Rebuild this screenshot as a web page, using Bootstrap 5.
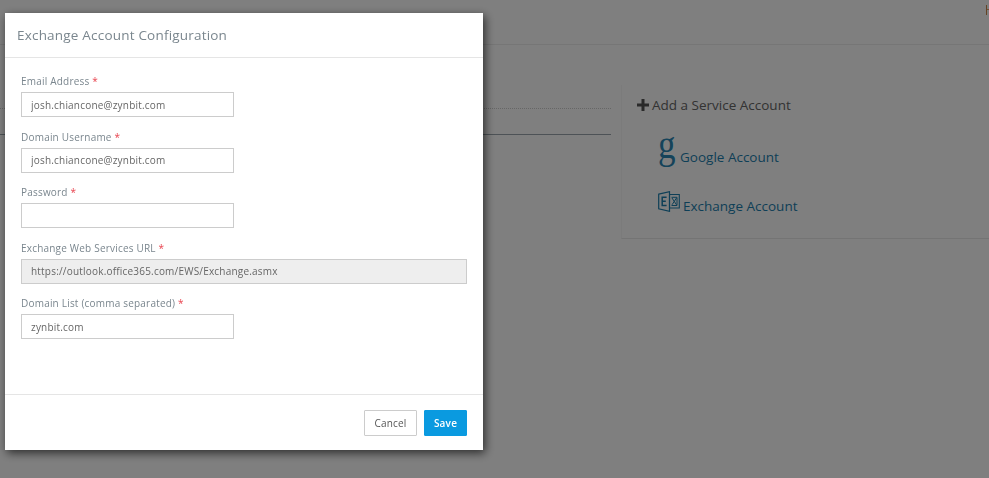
<!DOCTYPE html>
<html lang="en">
<head>
<meta charset="utf-8">
<title>Exchange Account Configuration</title>
<link href="https://cdn.jsdelivr.net/npm/bootstrap@5.3.0/dist/css/bootstrap.min.css" rel="stylesheet">
<style>
html,body{height:478px;overflow:hidden}
body{font-family:"Open Sans",sans-serif;background:#fff;color:#333}
.pg-top{height:45px;border-bottom:1px solid #ececec;display:flex;justify-content:flex-end;padding-top:5px}
.pg-flag{width:3px;height:10px;border-left:1px solid #c98748;background:linear-gradient(#e0a268,#e0a268) 0 4px/100% 1px no-repeat;}
.pg-main{display:flex}
.pg-left{width:611px;flex:none}
.pg-dots{margin-top:63px;border-bottom:1px dotted #ccc;height:1px}
.pg-solid{margin-top:25px;border-bottom:1px solid #9aa5ac;height:1px}
.pg-right{margin:40px 0 0 10px;width:368px;height:154px;border-left:1px solid #f7f7f7;border-bottom:1px solid #e8e8e8;padding:10px 0 0 15px}
.svc-head{font-size:13.5px;line-height:20px;color:#666;display:flex;align-items:center;gap:3px}
.svc-plus{width:12px;height:12px;flex:none}
.svc-link{font-size:13.5px;line-height:20px;color:#1c7fae;text-decoration:none;display:flex;align-items:flex-end}
.svc-g{margin:13px 0 0 21px;height:39px}
.svc-glyph{display:block;font-family:"Liberation Serif",serif;font-size:35px;line-height:30px;height:39px;width:16px;margin-right:6px;color:#2a86b4;transform:scaleY(1.16);transform-origin:50% 0}
.svc-e{margin:24px 0 0 21px}
.svc-ico{width:22px;height:21px;margin-right:3px;margin-bottom:4px;flex:none}
.cfg-dialog{position:absolute;left:5px;top:13px;width:478px;height:437px;margin:0}
.cfg-dialog .modal-content{height:100%;background:#fff;border:0;border-radius:0;box-shadow:2px 3px 9px rgba(0,0,0,.65)}
.cfg-head{height:45px;padding:0 12px;border-bottom:1px solid #e5e5e5;border-radius:0}
.cfg-title{font-size:13.5px;line-height:20px;font-weight:400;color:#7a868e;letter-spacing:.2px;margin:0}
.cfg-body{padding:16px 16px 0;flex:1}
.cfg-group{height:55.5px}
.cfg-label{display:block;font-size:10px;line-height:15px;letter-spacing:.2px;color:#7a868e;margin-bottom:3px}
.cfg-req{color:#e8434e}
.cfg-input.form-control{width:213px;height:25px;min-height:0;padding:0 9px;font-size:10px;letter-spacing:.2px;line-height:23px;color:#666;background:#fff;border:1px solid #ccc;border-radius:0;font-family:inherit}
.cfg-input.cfg-wide{width:446px}
.cfg-input.form-control:disabled{background:#eee;opacity:1}
.cfg-foot{height:56px;padding:0 16px;border-top:1px solid #e5e5e5;border-radius:0;gap:7px}
.cfg-foot .btn{margin:0;height:26px;border-radius:1px;padding:0;font-size:10px;line-height:24px;letter-spacing:.2px}
.cfg-cancel{width:53px;border:1px solid #ccc;color:#555;background:#fff}
.cfg-foot .cfg-save{width:43px;border:1px solid #0a9ae0;background:#0a9ae0;color:#fff;font-weight:600}
</style>
</head>
<body>
<div class="pg-top"><span class="pg-flag"></span></div>
<div class="pg-main">
  <div class="pg-left">
    <div class="pg-dots"></div>
    <div class="pg-solid"></div>
  </div>
  <div class="pg-right">
    <div class="svc-head">
      <svg class="svc-plus" viewBox="0 0 12 12"><path d="M4.5 0h3v4.5H12v3H7.5V12h-3V7.5H0v-3h4.5z" fill="#555"/></svg>
      <span>Add a Service Account</span>
    </div>
    <a class="svc-link svc-g" href="#"><span class="svc-glyph">g</span><span>Google Account</span></a>
    <a class="svc-link svc-e" href="#">
      <svg class="svc-ico" viewBox="0 0 22 21" fill="none" stroke="#1c7fae"><path d="M.7 3.2 11.5.7v19.6L.7 17.8z" stroke-width="1.2"/><path d="M11.5 3.5h9.8v13.5H11.5z" stroke-width="1.1"/><path d="M8.6 6.2H4.2v8.2h4.4M4.2 10.2h3.6" stroke-width="1.5"/><path d="M13.5 6.3h5.5v8.2h-5.5M14 7l4.5 6.8M18.5 7 14 13.8" stroke-width="1"/></svg>
      <span>Exchange Account</span>
    </a>
  </div>
</div>

<div class="modal-backdrop show"></div>
<div class="modal d-block">
<div class="modal-dialog cfg-dialog">
  <div class="modal-content">
    <div class="modal-header cfg-head"><h5 class="modal-title cfg-title">Exchange Account Configuration</h5></div>
    <div class="modal-body cfg-body">
      <div class="cfg-group"><label class="cfg-label">Email Address <span class="cfg-req">*</span></label><input class="form-control cfg-input" value="josh.chiancone@zynbit.com"></div>
      <div class="cfg-group"><label class="cfg-label">Domain Username <span class="cfg-req">*</span></label><input class="form-control cfg-input" value="josh.chiancone@zynbit.com"></div>
      <div class="cfg-group"><label class="cfg-label">Password <span class="cfg-req">*</span></label><input class="form-control cfg-input" type="password"></div>
      <div class="cfg-group"><label class="cfg-label">Exchange Web Services URL <span class="cfg-req">*</span></label><input class="form-control cfg-input cfg-wide" disabled value="https://outlook.office365.com/EWS/Exchange.asmx"></div>
      <div class="cfg-group"><label class="cfg-label">Domain List (comma separated) <span class="cfg-req">*</span></label><input class="form-control cfg-input" value="zynbit.com"></div>
    </div>
    <div class="modal-footer cfg-foot">
      <button type="button" class="btn cfg-cancel">Cancel</button>
      <button type="button" class="btn cfg-save">Save</button>
    </div>
  </div>
</div>
</div>
<script src="https://cdn.jsdelivr.net/npm/bootstrap@5.3.0/dist/js/bootstrap.bundle.min.js"></script>
</body>
</html>
